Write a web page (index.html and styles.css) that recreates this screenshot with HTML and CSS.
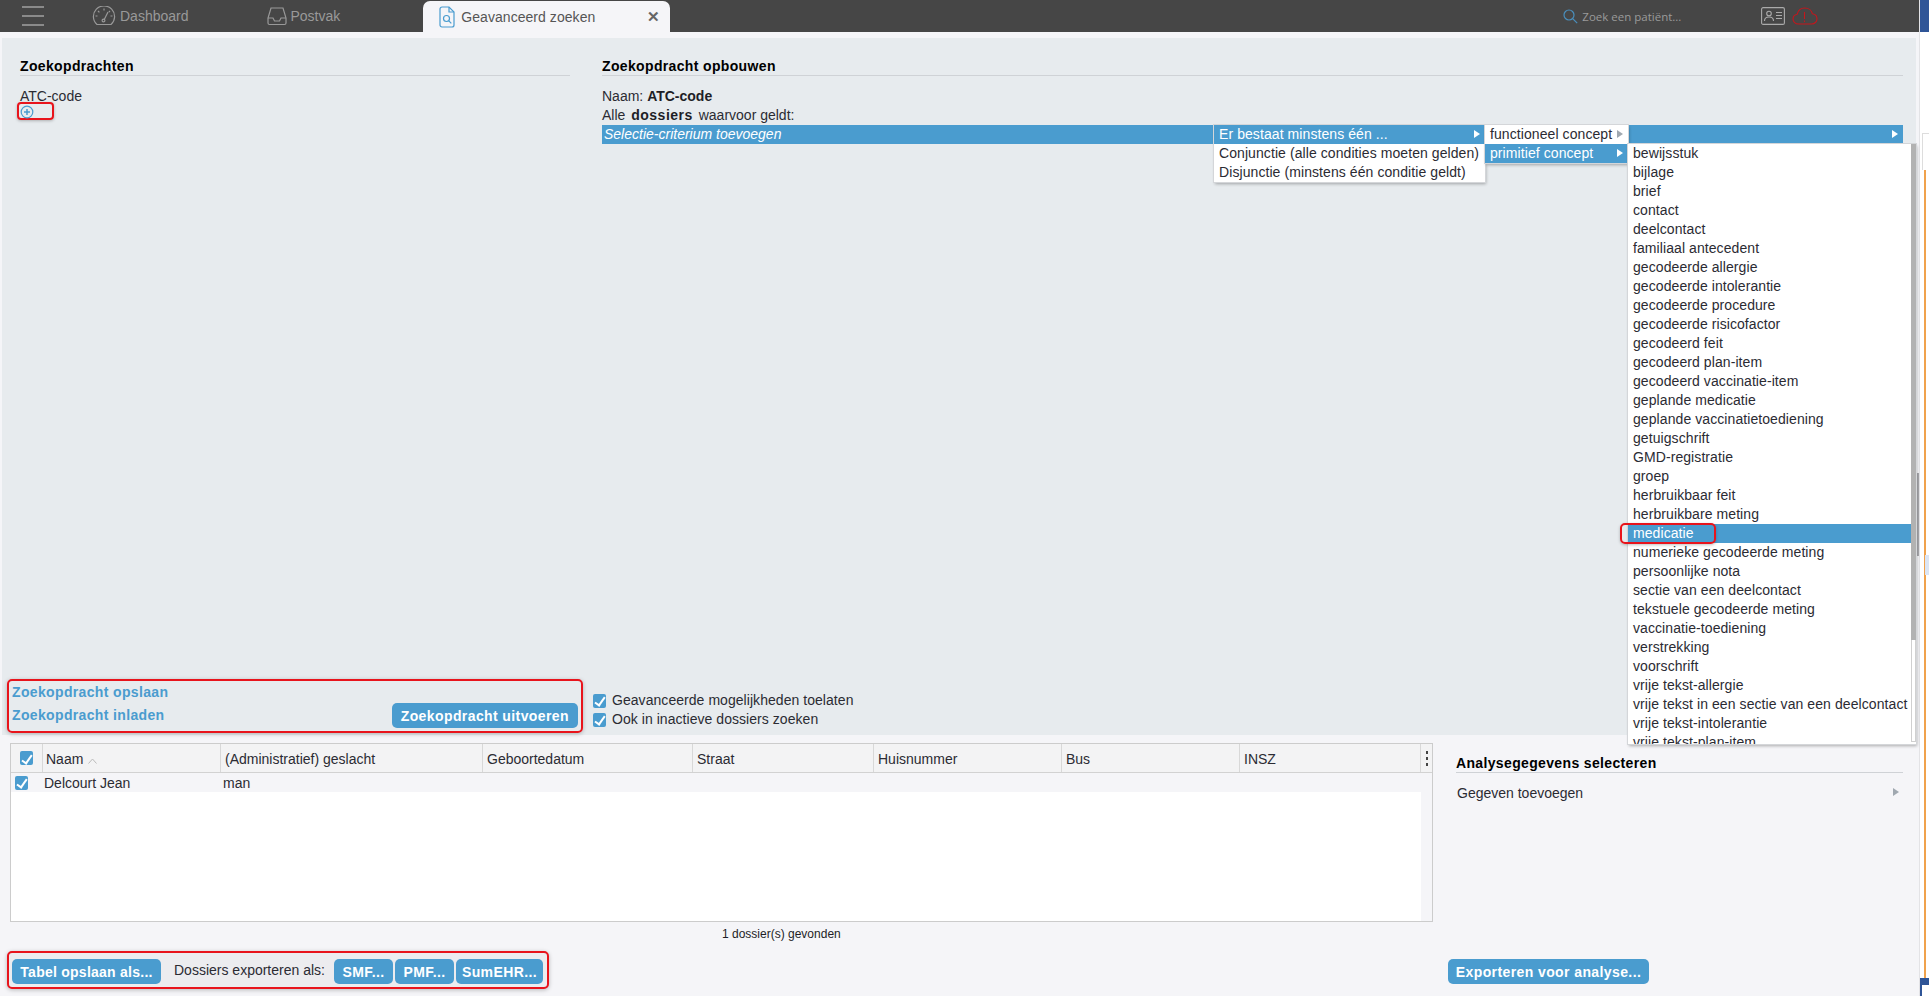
FILE: index.html

```html
<!DOCTYPE html>
<html lang="nl">
<head>
  <meta charset="UTF-8" />
  <title>Geavanceerd zoeken</title>
  <link rel="stylesheet" href="styles.css">
</head>
<body>
  <div class="app">
    <header class="topbar">
      <div class="burger"><span></span><span></span><span></span></div>
      <div class="nav-tab nav-dash">
        <svg width="24" height="20" viewBox="0 0 24 20" fill="none" stroke="#999" stroke-width="1.2"><path d="M5 18.5h14a10.6 10.6 0 1 0-14 0z"/><path d="M12 14l4-8M3.5 10h2M6 5l1.4 1.4M12 2.5v2M18 5l-1.2 1.2M20.500 10h-2"/><circle cx="11.500" cy="14.500" r="1.400"/></svg>
        <span>Dashboard</span>
      </div>
      <div class="nav-tab nav-post">
        <svg width="20" height="20" viewBox="0 0 20 20" fill="none" stroke="#999" stroke-width="1.2"><path d="M4 2h12l3 10v5a1.500 1.500 0 0 1-1.500 1.500h-15A1.500 1.500 0 0 1 1 17v-5z"/><path d="M1 12h5l1.500 3h5l1.500-3h5"/></svg>
        <span>Postvak</span>
      </div>
      <div class="active-tab">
        <svg width="16" height="22" viewBox="0 0 16 22" fill="none" stroke="#4a9ccf" stroke-width="1.200"><path d="M1 3a2 2 0 0 1 2-2h7l5 5v13a2 2 0 0 1-2 2H3a2 2 0 0 1-2-2z"/><path d="M10 1v5h5"/><circle cx="7.500" cy="12.500" r="3"/><path d="M9.800 14.800l2.500 2.500"/></svg>
        <span class="active-label">Geavanceerd zoeken</span>
        <span class="tab-close">&#10005;</span>
      </div>
      <div class="patient-search">
        <svg width="15" height="15" viewBox="0 0 15 15" fill="none" stroke="#4a8fbd" stroke-width="1.200"><circle cx="6" cy="6" r="5"/><path d="M9.700 9.700l4.500 4.500"/></svg>
        <span>Zoek een patiënt...</span>
      </div>
      <svg class="card-icon" width="24" height="18" viewBox="0 0 24 18" fill="none" stroke="#aaa" stroke-width="1.100"><rect x="0.600" y="0.600" width="22.800" height="16.800" rx="1.500"/><circle cx="8" cy="6.500" r="2.300"/><path d="M3.500 14c0-3 2-4 4.500-4s4.500 1 4.500 4M15 5.500h6M15 8.500h6M15 11.500h6"/></svg>
      <svg class="cloud-icon" width="26" height="18" viewBox="0 0 26 18" fill="none" stroke="#c4161c" stroke-width="1.100"><path d="M6.500 17C3.500 17 1 14.800 1 12c0-2.500 1.800-4.400 4.200-4.800C6 3.600 9 1 12.800 1c3.800 0 6.900 2.500 7.600 5.800 2.700.4 4.600 2.600 4.600 5.100 0 2.800-2.400 5.100-5.400 5.100z"/><path d="M12.500 5v7M12.500 13.500v1.500"/></svg>
    </header>

    <section class="search-panel">
      <div class="queries">
        <h2 class="section-title">Zoekopdrachten</h2>
        <div class="query-name">ATC-code</div>
        <div class="add-query">
          <svg width="14" height="14" viewBox="0 0 14 14" fill="none" stroke="#4a9ccf" stroke-width="1.200"><circle cx="7" cy="7" r="5.800"/><path d="M7 4v6M4 7h6" stroke-width="1.500"/></svg>
        </div>
        <div class="query-actions">
          <div class="action-links">
            <a class="action-link">Zoekopdracht opslaan</a>
            <a class="action-link">Zoekopdracht inladen</a>
          </div>
          <button class="btn">Zoekopdracht uitvoeren</button>
        </div>
      </div>

      <div class="builder">
        <h2 class="section-title">Zoekopdracht opbouwen</h2>
        <div class="builder-line">Naam: <b>ATC-code</b></div>
        <div class="builder-line">Alle <b class="wide">dossiers</b> waarvoor geldt:</div>
        <div class="criterion">
          <em>Selectie-criterium toevoegen</em>
          <span class="arrow arrow-white bar-arrow"></span>

          <ul class="menu menu-first">
            <li class="on">Er bestaat minstens één ...<span class="arrow arrow-white"></span></li>
            <li>Conjunctie (alle condities moeten gelden)</li>
            <li>Disjunctie (minstens één conditie geldt)</li>
          </ul>
          <ul class="menu menu-second">
            <li>functioneel concept<span class="arrow"></span></li>
            <li class="on">primitief concept<span class="arrow arrow-white"></span></li>
          </ul>
          <div class="menu menu-third">
            <ul class="long-list">
              <li>bewijsstuk</li>
              <li>bijlage</li>
              <li>brief</li>
              <li>contact</li>
              <li>deelcontact</li>
              <li>familiaal antecedent</li>
              <li>gecodeerde allergie</li>
              <li>gecodeerde intolerantie</li>
              <li>gecodeerde procedure</li>
              <li>gecodeerde risicofactor</li>
              <li>gecodeerd feit</li>
              <li>gecodeerd plan-item</li>
              <li>gecodeerd vaccinatie-item</li>
              <li>geplande medicatie</li>
              <li>geplande vaccinatietoediening</li>
              <li>getuigschrift</li>
              <li>GMD-registratie</li>
              <li>groep</li>
              <li>herbruikbaar feit</li>
              <li>herbruikbare meting</li>
              <li class="on">medicatie</li>
              <li>numerieke gecodeerde meting</li>
              <li>persoonlijke nota</li>
              <li>sectie van een deelcontact</li>
              <li>tekstuele gecodeerde meting</li>
              <li>vaccinatie-toediening</li>
              <li>verstrekking</li>
              <li>voorschrift</li>
              <li>vrije tekst-allergie</li>
              <li>vrije tekst in een sectie van een deelcontact</li>
              <li>vrije tekst-intolerantie</li>
              <li>vrije tekst-plan-item</li>
            </ul>
            <div class="menu-scroll"><div class="menu-thumb"></div></div>
            <div class="menu-mark"></div>
          </div>
        </div>
        <div class="options">
          <label class="option"><span class="check"></span>Geavanceerde mogelijkheden toelaten</label>
          <label class="option"><span class="check"></span>Ook in inactieve dossiers zoeken</label>
        </div>
      </div>
    </section>

    <section class="lower">
      <div class="results">
        <div class="table">
          <div class="thead">
            <div class="cell col-check"><span class="check"></span></div>
            <div class="cell col-name">Naam <svg class="sort" width="9" height="6" viewBox="0 0 9 6" fill="none" stroke="#bbb"><path d="M0.500 5.500l4-4.500 4 4.500"/></svg></div>
            <div class="cell col-sex">(Administratief) geslacht</div>
            <div class="cell col-birth">Geboortedatum</div>
            <div class="cell col-street">Straat</div>
            <div class="cell col-nr">Huisnummer</div>
            <div class="cell col-bus">Bus</div>
            <div class="cell col-insz">INSZ</div>
            <div class="cell col-more"><span class="kebab"><i></i><i></i><i></i></span></div>
          </div>
          <div class="tbody">
            <div class="trow">
              <div class="cell col-check"><span class="check"></span></div>
              <div class="cell col-name">Delcourt Jean</div>
              <div class="cell col-sex">man</div>
            </div>
            <div class="tfill"></div>
          </div>
        </div>
        <div class="found">1 dossier(s) gevonden</div>
        <div class="export-bar">
          <button class="btn btn-table">Tabel opslaan als...</button>
          <span class="export-label">Dossiers exporteren als:</span>
          <button class="btn btn-smf">SMF...</button>
          <button class="btn btn-smf">PMF...</button>
          <button class="btn btn-sum">SumEHR...</button>
        </div>
      </div>

      <div class="analysis">
        <h2 class="section-title">Analysegegevens selecteren</h2>
        <div class="add-data">Gegeven toevoegen<span class="arrow"></span></div>
        <button class="btn btn-export">Exporteren voor analyse...</button>
      </div>
    </section>
    <div class="page-thumb"></div>
  </div>

  <aside class="side-window">
    <div class="side-top"></div>
    <div class="side-body">
      <div class="side-head"></div>
      <div class="side-orange"></div>
    </div>
    <div class="side-chip"></div>
    <div class="side-bottom"><span></span></div>
  </aside>
</body>
</html>
```

FILE: styles.css

```css
* {
  box-sizing: border-box;
}
html, body {
  height: 100%;
  overflow: hidden;
}
body {
  margin: 0;
  display: flex;
  font-family: "Liberation Sans", Arial, sans-serif;
  font-size: 14px;
  color: #2b2b33;
  background: #f5f5f8;
}
ul {
  list-style: none;
  margin: 0;
  padding: 0;
}
.app {
  position: relative;
  width: 1920px;
  height: 996px;
  display: flex;
  flex-direction: column;
  border-right: 1px solid #e3e3e6;
}
.page-thumb {
  position: absolute;
  right: 0;
  top: 473px;
  width: 2px;
  height: 83px;
  background: #a9a9ad;
}

/* top bar */
.topbar {
  height: 32px;
  flex: none;
  display: flex;
  align-items: center;
  background: #464646;
  color: #999;
}
.burger {
  width: 22px;
  margin-left: 22px;
  display: flex;
  flex-direction: column;
  gap: 7px;
}
.burger span {
  height: 2px;
  background: #8a8a8a;
}
.nav-tab {
  display: flex;
  align-items: center;
  gap: 4px;
}
.nav-dash {
  margin-left: 48px;
}
.nav-post {
  margin-left: 78px;
}
.active-tab {
  width: 247px;
  height: 31px;
  margin: 1px 0 0 83px;
  padding: 0 10px 0 16px;
  display: flex;
  align-items: center;
  background: #f5f5f8;
  border-radius: 7px 7px 0 0;
  color: #555;
}
.active-label {
  margin-left: 6px;
  flex: 1;
  letter-spacing: 0.05px;
}
.tab-close {
  font-size: 15px;
  font-weight: bold;
  color: #666;
}
.patient-search {
  margin-left: 893px;
  display: flex;
  align-items: center;
  gap: 4px;
  font-family: "Open Sans", sans-serif;
  font-size: 11.5px;
  color: #9a9a9a;
  width: 198px;
}
.cloud-icon {
  margin-left: 7px;
}

/* search panel */
.search-panel {
  flex: none;
  height: 697px;
  margin: 6px 3px 0 2px;
  display: flex;
  background: #e7ebee;
}
.queries {
  width: 600px;
  padding: 21px 0 0 18px;
  display: flex;
  flex-direction: column;
}
.section-title {
  margin: 0;
  height: 17px;
  line-height: 15px;
  font-size: 14px;
  font-weight: bold;
  letter-spacing: 0.35px;
  color: #000;
  border-bottom: 1px solid #cfd2d6;
}
.queries .section-title {
  width: 550px;
}
.query-name {
  margin-top: 12px;
  line-height: 16px;
}
.add-query {
  width: 37px;
  height: 18px;
  margin: -2px 0 0 -3px;
  padding: 1px 0 0 1px;
  border: 2px solid #e8141c;
  border-radius: 4px;
  box-shadow: 0 1px 3px rgba(0, 0, 0, 0.25);
}
.add-query svg {
  display: block;
}
.query-actions {
  margin: auto 0 2px -13px;
  width: 576px;
  height: 54px;
  padding: 0 3px 3px 3px;
  display: flex;
  justify-content: space-between;
  align-items: flex-end;
  border: 2px solid #e8141c;
  border-radius: 5px;
  box-shadow: 0 1px 4px rgba(0, 0, 0, 0.25);
}
.action-links {
  display: flex;
  flex-direction: column;
  gap: 7px;
  padding-bottom: 5px;
}
.action-link {
  line-height: 16px;
  font-weight: bold;
  letter-spacing: 0.35px;
  color: #4a9ccf;
}
.btn {
  height: 25px;
  padding: 0 9px;
  border: none;
  border-radius: 5px;
  background: #4a9ccf;
  color: #fff;
  font-family: "Liberation Sans", Arial, sans-serif;
  font-size: 14px;
  font-weight: bold;
  letter-spacing: 0.4px;
  white-space: nowrap;
}

/* builder */
.builder {
  width: 1301px;
  padding-top: 21px;
  display: flex;
  flex-direction: column;
}
.builder-line {
  height: 19px;
  line-height: 19px;
}
.builder .section-title + .builder-line {
  margin-top: 11px;
}
.builder b {
  color: #1e1e26;
}
.wide {
  margin: 0 2px;
  letter-spacing: 0.5px;
}
.criterion {
  position: relative;
  height: 19px;
  padding-left: 2px;
  line-height: 19px;
  background: #4a9ccf;
  color: #fff;
}
.arrow {
  position: absolute;
  right: 5px;
  top: 5px;
  width: 0;
  height: 0;
  border-left: 6px solid #a0a8b0;
  border-top: 4.500px solid transparent;
  border-bottom: 4.500px solid transparent;
}
.arrow-white {
  border-left-color: #fff;
}
.menu {
  position: absolute;
  background: #fff;
  color: #2b2b33;
  letter-spacing: 0.08px;
  box-shadow: 1px 2px 3px rgba(0, 0, 0, 0.3);
  outline: 1px solid #d4d6d9;
}
.menu li {
  position: relative;
  height: 19px;
  line-height: 19px;
  padding-left: 5px;
  white-space: nowrap;
}
.menu li.on {
  background: #4a9ccf;
  color: #fff;
}
.menu-first {
  left: 612px;
  top: 0;
  width: 271px;
  z-index: 1;
}
.menu-second {
  left: 883px;
  top: 0;
  width: 143px;
  z-index: 2;
}
.menu-third {
  left: 1026px;
  top: 19px;
  width: 288px;
  height: 600px;
  z-index: 3;
  display: flex;
}
.long-list {
  width: 283px;
  height: 600px;
  flex: none;
  overflow: hidden;
}
.menu-mark {
  position: absolute;
  left: -8px;
  top: 379px;
  width: 96px;
  height: 21px;
  border: 2px solid #e8141c;
  border-radius: 5px;
  box-shadow: 0 1px 3px rgba(0, 0, 0, 0.25);
}
.menu-scroll {
  width: 5px;
  height: 598px;
  border: 1px solid #d0d0d0;
}
.menu-thumb {
  height: 496px;
  margin: -1px;
  background: #b2b2b2;
}
.options {
  margin-top: auto;
  margin-bottom: 8px;
  margin-left: -9px;
  display: flex;
  flex-direction: column;
  gap: 4px;
  letter-spacing: 0.05px;
}
.option {
  height: 15px;
  line-height: 15px;
  display: flex;
  align-items: center;
  gap: 6px;
}
.check {
  position: relative;
  flex: none;
  display: inline-block;
  width: 13px;
  height: 14px;
  border-radius: 2px;
  background: #4a9ccf;
}
.check::after {
  content: "";
  position: absolute;
  left: 4px;
  top: 1.500px;
  width: 4px;
  height: 9px;
  border: solid #fff;
  border-width: 0 2px 2px 0;
  transform: rotate(35deg);
}

/* results */
.lower {
  flex: 1;
  display: flex;
  min-height: 0;
}
.results {
  width: 1447px;
  padding: 8px 0 0 10px;
  display: flex;
  flex-direction: column;
}
.table {
  width: 1423px;
  height: 179px;
  display: flex;
  flex-direction: column;
  border: 1px solid #ccc;
}
.thead {
  height: 29px;
  flex: none;
  display: flex;
  background: #f3f3f4;
  border-bottom: 1px solid #d2d2d2;
}
.thead .cell {
  border-right: 1px solid #d8d8d8;
  line-height: 30px;
}
.cell {
  flex: none;
  padding-left: 4px;
  white-space: nowrap;
}
.col-check {
  width: 32px;
  display: flex;
  align-items: center;
}
.thead .col-check {
  padding-left: 9px;
}
.thead .col-name {
  padding-left: 3px;
}
.col-name {
  width: 178px;
}
.col-sex {
  width: 262px;
}
.col-birth {
  width: 210px;
}
.col-street {
  width: 181px;
}
.col-nr {
  width: 188px;
}
.col-bus {
  width: 178px;
}
.col-insz {
  width: 181px;
}
.thead .col-more {
  width: 12px;
  padding: 0;
  border-right: none;
}
.sort {
  margin-left: 1px;
}
.kebab {
  height: 100%;
  display: flex;
  flex-direction: column;
  justify-content: center;
  align-items: center;
  gap: 3px;
}
.kebab i {
  width: 2px;
  height: 3px;
  background: #444;
}
.tbody {
  flex: 1;
  display: flex;
  flex-direction: column;
  width: 1410px;
}
.trow {
  height: 19px;
  flex: none;
  display: flex;
  line-height: 21px;
}
.trow .col-check {
  width: 33px;
}
.trow .col-name {
  width: 178px;
  padding-left: 0;
}
.trow .col-sex {
  padding-left: 1px;
}
.tfill {
  flex: 1;
  background: #fff;
}
.found {
  margin: 5px 0 0 712px;
  font-size: 12px;
  line-height: 14px;
  color: #1e1e26;
}
.export-bar {
  width: 542px;
  height: 38px;
  margin: 10px 0 0 -3px;
  padding: 6px 3px 0 3px;
  display: flex;
  align-items: flex-start;
  border: 2px solid #e8141c;
  border-radius: 5px;
  background: #ececef;
  box-shadow: 0 1px 4px rgba(0, 0, 0, 0.25);
}
.btn-table {
  flex: none;
  width: 149px;
  padding: 0;
  letter-spacing: 0.25px;
}
.export-label {
  flex: none;
  width: 160px;
  margin: 3px 0 0 13px;
  line-height: 16px;
  white-space: nowrap;
}
.btn-smf {
  flex: none;
  width: 59px;
  padding: 0;
  margin-right: 2px;
}
.btn-sum {
  flex: none;
  width: 87px;
  padding: 0;
}

/* analysis */
.analysis {
  flex: 1;
  padding: 21px 16px 0 9px;
  display: flex;
  flex-direction: column;
}
.add-data {
  position: relative;
  margin: 11px 0 0 1px;
  line-height: 19px;
}
.add-data .arrow {
  right: 4px;
  top: 4px;
}
.btn-export {
  align-self: flex-start;
  margin: auto 0 12px -8px;
  padding: 0;
  width: 201px;
}

/* piece of the window behind */
.side-window {
  flex: 1;
  display: flex;
  flex-direction: column;
  background: #fff;
  position: relative;
}
.side-top {
  height: 32px;
  flex: none;
  background: #2f5597;
}
.side-body {
  flex: 1;
  display: flex;
  flex-direction: column;
}
.side-head {
  flex: none;
  height: 37px;
  margin: 101px 0 0 2px;
  border-top: 1px solid #ddd;
  border-left: 1px solid #ddd;
}
.side-orange {
  flex: 1;
  width: 2px;
  margin-left: 4px;
  background: #f0a24c;
}
.side-chip {
  position: absolute;
  right: 0;
  top: 555px;
  width: 4px;
  height: 20px;
  background: #dbe5f4;
}
.side-bottom {
  height: 18px;
  flex: none;
  padding: 7px 0 0 2px;
  background: #2f5597;
}
.side-bottom span {
  display: block;
  height: 11px;
  background: #fff;
}
```
